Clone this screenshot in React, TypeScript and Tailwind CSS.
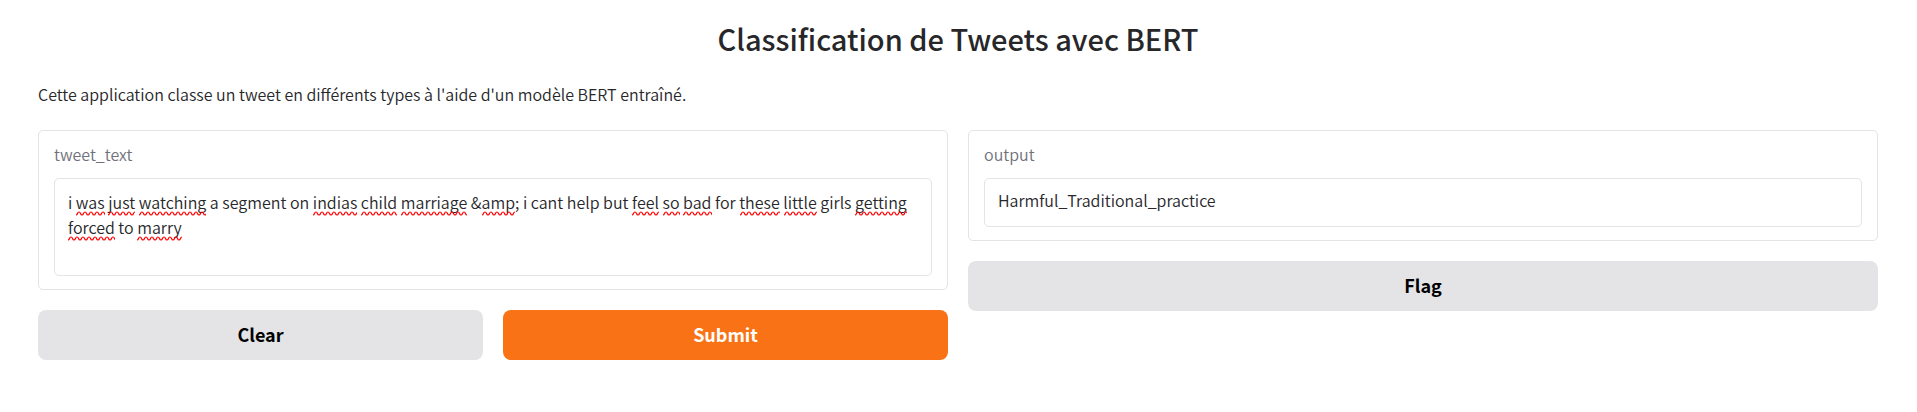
import { Fragment, useState } from "react";
import type { ReactNode } from "react";

const INITIAL_TWEET =
  "i was just watching a segment on indias child marriage &amp; i cant help but feel so bad for these little girls getting forced to marry";

const UNKNOWN_WORDS = new Set([
  "was", "just", "watching", "indias", "child", "marriage", "amp", "feel", "so",
  "bad", "these", "little", "getting", "forced", "marry",
]);

const fieldText = "px-[13px] text-[16px] leading-[25px] font-[350]";

function SpellingMarks({ text }: { text: string }) {
  return (
    <div
      aria-hidden="true"
      className={`pointer-events-none col-start-1 row-start-1 border border-transparent pt-[11px] whitespace-pre-wrap text-transparent ${fieldText}`}
    >
      {text.split(/(\W+)/).map((part, i) =>
        UNKNOWN_WORDS.has(part) ? (
          <span
            key={i}
            className="bg-[url('data:image/svg+xml,%3Csvg%20xmlns=%22http://www.w3.org/2000/svg%22%20width=%226%22%20height=%225%22%3E%3Cpath%20d=%22M0%204Q1%204%201.5%202.5T3%201T4.5%202.5T6%204%22%20fill=%22none%22%20stroke=%22%23ff0000%22%20stroke-width=%221.2%22/%3E%3C/svg%3E')] bg-size-[6px_5px] bg-bottom-left bg-repeat-x pb-[2px]"
          >
            {part}
          </span>
        ) : (
          <Fragment key={i}>{part}</Fragment>
        ),
      )}
    </div>
  );
}

function Panel({ id, label, children }: { id: string; label: string; children: ReactNode }) {
  return (
    <div className="rounded-[5px] border border-zinc-200 px-[15px] pt-[11px] pb-[13px]">
      <label htmlFor={id} className="mb-3 block text-[16px] leading-6 font-[350] text-zinc-500">
        {label}
      </label>
      {children}
    </div>
  );
}

function ActionButton({
  primary = false,
  onClick,
  children,
}: {
  primary?: boolean;
  onClick?: () => void;
  children: ReactNode;
}) {
  return (
    <button
      type="button"
      onClick={onClick}
      className={`h-[50px] flex-1 rounded-lg pb-[2px] text-[18px] leading-7 font-bold ${
        primary ? "bg-[#f97316] text-white" : "bg-zinc-200 text-black"
      }`}
    >
      {children}
    </button>
  );
}

export default function App() {
  const [tweet, setTweet] = useState(INITIAL_TWEET);
  const [output, setOutput] = useState("Harmful_Traditional_practice");

  const clear = () => {
    setTweet("");
    setOutput("");
  };

  return (
    <main className="bg-white pr-[39px] pb-12 pl-[38px] pt-5 font-['Noto_Sans_CJK_SC',sans-serif] text-zinc-800">
      <h1 className="text-center text-[29px] leading-9 font-medium">
        Classification de Tweets avec BERT
      </h1>
      <p className="mt-[22px] text-[16px] leading-8 font-[350]">
        Cette application classe un tweet en différents types à l'aide d'un modèle BERT entraîné.
      </p>
      <div className="mt-5 grid grid-cols-2 items-start gap-5">
        <section className="flex flex-col gap-5">
          <Panel id="tweet" label="tweet_text">
            <div className="grid">
              <textarea
                id="tweet"
                rows={3}
                spellCheck={false}
                value={tweet}
                onChange={(e) => setTweet(e.target.value)}
                className={`col-start-1 row-start-1 block w-full resize-none rounded-[5px] border border-zinc-200 bg-white pt-[11px] pb-[10px] outline-none ${fieldText}`}
              />
              <SpellingMarks text={tweet} />
            </div>
          </Panel>
          <div className="flex gap-5">
            <ActionButton onClick={clear}>Clear</ActionButton>
            <ActionButton primary>Submit</ActionButton>
          </div>
        </section>
        <section className="flex flex-col gap-5">
          <Panel id="output" label="output">
            <input
              id="output"
              type="text"
              readOnly
              value={output}
              className={`block h-[49px] w-full rounded-[5px] border border-zinc-200 bg-white pb-[6px] outline-none ${fieldText}`}
            />
          </Panel>
          <div className="flex">
            <ActionButton>Flag</ActionButton>
          </div>
        </section>
      </div>
    </main>
  );
}
